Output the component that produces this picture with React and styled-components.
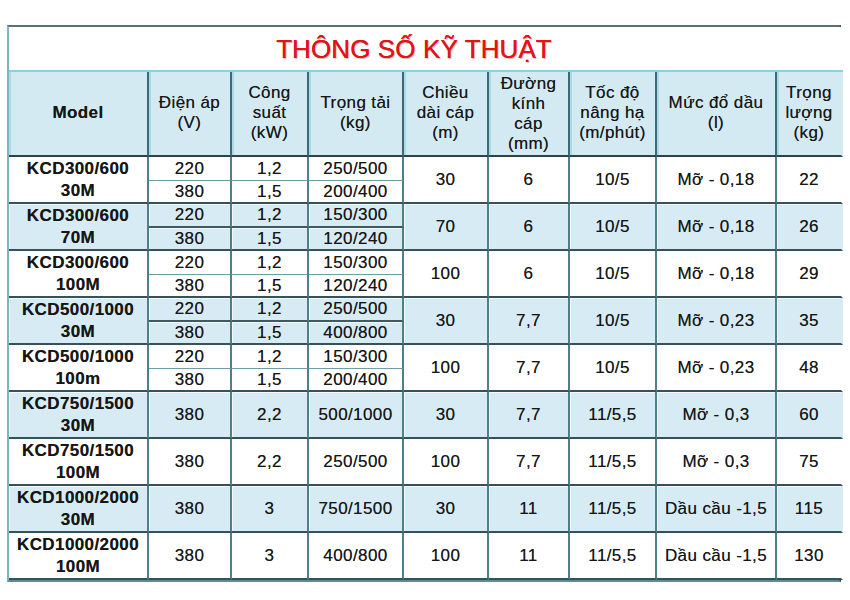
import React from 'react';
import styled, { createGlobalStyle } from 'styled-components';

const COLUMNS = '140px 83px 77px 95px 85px 81px 87px 120px 66px';

const HEADERS = [
  { label: 'Model', bold: true },
  { label: 'Điện áp\n(V)' },
  { label: 'Công\nsuất\n(kW)' },
  { label: 'Trọng tải\n(kg)' },
  { label: 'Chiều\ndài cáp\n(m)' },
  { label: 'Đường\nkính\ncáp\n(mm)' },
  { label: 'Tốc độ\nnâng hạ\n(m/phút)' },
  { label: 'Mức đổ dầu\n(l)' },
  { label: 'Trọng\nlượng\n(kg)' },
];

const MODELS = [
  {
    name: 'KCD300/600\n30M', sub: [['220', '1,2', '250/500'], ['380', '1,5', '200/400']],
    cable: '30', dia: '6', speed: '10/5', oil: 'Mỡ - 0,18', weight: '22',
  },
  {
    name: 'KCD300/600\n70M', sub: [['220', '1,2', '150/300'], ['380', '1,5', '120/240']],
    cable: '70', dia: '6', speed: '10/5', oil: 'Mỡ - 0,18', weight: '26',
  },
  {
    name: 'KCD300/600\n100M', sub: [['220', '1,2', '150/300'], ['380', '1,5', '120/240']],
    cable: '100', dia: '6', speed: '10/5', oil: 'Mỡ - 0,18', weight: '29',
  },
  {
    name: 'KCD500/1000\n30M', sub: [['220', '1,2', '250/500'], ['380', '1,5', '400/800']],
    cable: '30', dia: '7,7', speed: '10/5', oil: 'Mỡ - 0,23', weight: '35',
  },
  {
    name: 'KCD500/1000\n100m', sub: [['220', '1,2', '150/300'], ['380', '1,5', '200/400']],
    cable: '100', dia: '7,7', speed: '10/5', oil: 'Mỡ - 0,23', weight: '48',
  },
  {
    name: 'KCD750/1500\n30M', sub: [['380', '2,2', '500/1000']],
    cable: '30', dia: '7,7', speed: '11/5,5', oil: 'Mỡ - 0,3', weight: '60',
  },
  {
    name: 'KCD750/1500\n100M', sub: [['380', '2,2', '250/500']],
    cable: '100', dia: '7,7', speed: '11/5,5', oil: 'Mỡ - 0,3', weight: '75',
  },
  {
    name: 'KCD1000/2000\n30M', sub: [['380', '3', '750/1500']],
    cable: '30', dia: '11', speed: '11/5,5', oil: 'Dầu cầu -1,5', weight: '115',
  },
  {
    name: 'KCD1000/2000\n100M', sub: [['380', '3', '400/800']],
    cable: '100', dia: '11', speed: '11/5,5', oil: 'Dầu cầu -1,5', weight: '130',
  },
];

const GlobalStyle = createGlobalStyle`
  body {
    margin: 0;
    background: #fff;
    font-family: 'Liberation Sans', Arial, sans-serif;
  }
`;

const Page = styled.div`
  padding: 25px 0 0 7px;
`;

const Sheet = styled.div`
  display: grid;
  width: 834px;
  grid-template-columns: ${COLUMNS};
  grid-template-rows: 45px 85px repeat(9, 24px 23px);
  box-sizing: border-box;
  border-left: 2px solid #7fb4c2;
  border-top: 2px solid #5f6e74;
  border-right: 2px solid #33505a;
  border-bottom: 2px solid #5b8c98;
  color: #161616;
`;

const Title = styled.div`
  grid-column: 1 / -1;
  display: flex;
  align-items: center;
  justify-content: center;
  background: #fff;
  border-bottom: 2px solid #8ccfe0;
  color: #e3131b;
  font-size: 26px;
  letter-spacing: 0.1px;
  text-shadow: 0 0 0.6px #e3131b, 1px 1px 1px rgba(90, 0, 0, 0.3);
  padding: 2px 24px 0 0;
`;

const Cell = styled.div`
  grid-row: span ${(p) => p.span || 1};
  display: flex;
  align-items: center;
  justify-content: center;
  text-align: center;
  white-space: pre-line;
  box-sizing: border-box;
  background: ${(p) => (p.shaded ? '#d6ebf3' : '#fff')};
  border-right: 2px solid ${(p) => (p.last ? 'transparent' : '#4f7f8a')};
  border-bottom: ${(p) => p.bottom};
  box-shadow: ${(p) => (p.shaded ? 'inset 1px 1px 0 rgba(255,255,255,0.7)' : 'none')};
  font-size: 17px;
  letter-spacing: 0.4px;
  line-height: 22px;
  font-weight: ${(p) => (p.bold ? 700 : 400)};
  text-shadow: 0 0 0.4px rgba(0, 0, 0, 0.6);
`;

const HeadCell = styled(Cell)`
  background: #d4eaf2;
  line-height: 20px;
  border-right-color: ${(p) => (p.last ? 'transparent' : '#3f6a75')};
  box-shadow: inset 2px 0 0 #a9dce8;
  padding-bottom: ${(p) => (p.tall ? 0 : 2)}px;
`;

const GROUP_LINE = '2px solid #35525b';

export default function App() {
  return (
    <Page>
      <GlobalStyle />
      <Sheet>
        <Title>THÔNG SỐ KỸ THUẬT</Title>
        {HEADERS.map((h, i) => (
          <HeadCell
            key={h.label}
            bold={h.bold}
            last={i === HEADERS.length - 1}
            tall={i === 5}
            bottom="2px solid #2d4249"
          >
            {h.label}
          </HeadCell>
        ))}
        {MODELS.map((m, gi) => {
          const shaded = gi % 2 === 1;
          const span = 2;
          const single = m.sub.length === 1;
          const subLine = shaded ? '2px solid #3e5961' : '1px solid #6f9ca6';
          return (
            <React.Fragment key={m.name}>
              <Cell span={span} shaded={shaded} bold bottom={GROUP_LINE}>
                {m.name}
              </Cell>
              {m.sub[0].map((v, ci) => (
                <Cell
                  key={`a${ci}`}
                  span={single ? 2 : 1}
                  shaded={shaded}
                  bottom={single ? GROUP_LINE : subLine}
                >
                  {v}
                </Cell>
              ))}
              <Cell span={span} shaded={shaded} bottom={GROUP_LINE}>{m.cable}</Cell>
              <Cell span={span} shaded={shaded} bottom={GROUP_LINE}>{m.dia}</Cell>
              <Cell span={span} shaded={shaded} bottom={GROUP_LINE}>{m.speed}</Cell>
              <Cell span={span} shaded={shaded} bottom={GROUP_LINE}>{m.oil}</Cell>
              <Cell span={span} shaded={shaded} last bottom={GROUP_LINE}>{m.weight}</Cell>
              {!single && m.sub[1].map((v, ci) => (
                <Cell key={`b${ci}`} shaded={shaded} bottom={GROUP_LINE}>
                  {v}
                </Cell>
              ))}
            </React.Fragment>
          );
        })}
      </Sheet>
    </Page>
  );
}
